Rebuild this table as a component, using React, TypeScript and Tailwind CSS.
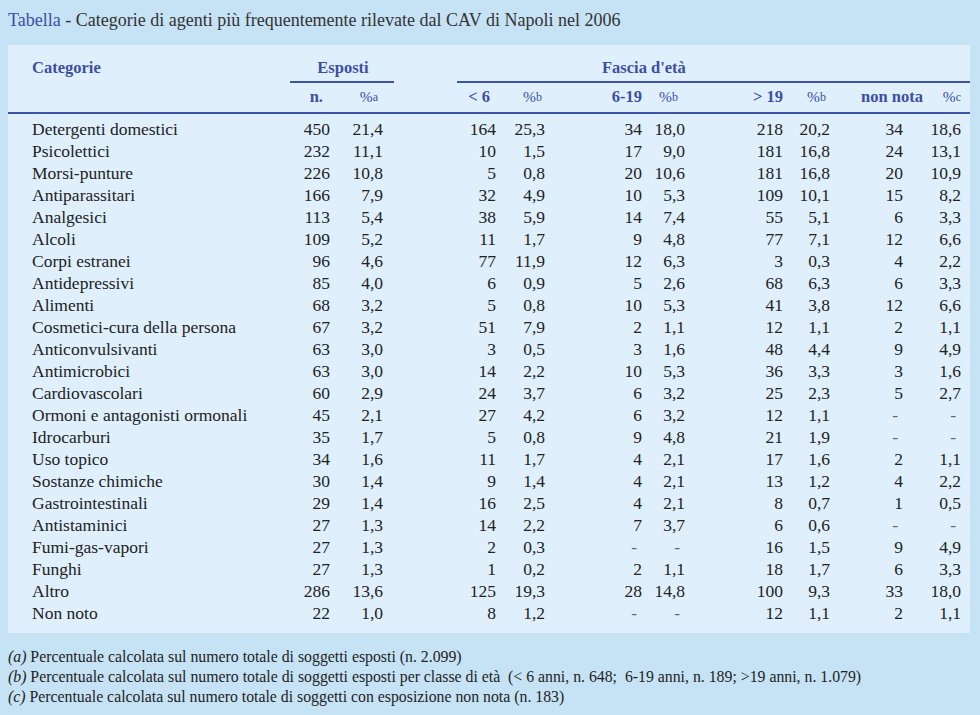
const rows: string[][] = [
  ['Detergenti domestici', '450', '21,4', '164', '25,3', '34', '18,0', '218', '20,2', '34', '18,6'],
  ['Psicolettici', '232', '11,1', '10', '1,5', '17', '9,0', '181', '16,8', '24', '13,1'],
  ['Morsi-punture', '226', '10,8', '5', '0,8', '20', '10,6', '181', '16,8', '20', '10,9'],
  ['Antiparassitari', '166', '7,9', '32', '4,9', '10', '5,3', '109', '10,1', '15', '8,2'],
  ['Analgesici', '113', '5,4', '38', '5,9', '14', '7,4', '55', '5,1', '6', '3,3'],
  ['Alcoli', '109', '5,2', '11', '1,7', '9', '4,8', '77', '7,1', '12', '6,6'],
  ['Corpi estranei', '96', '4,6', '77', '11,9', '12', '6,3', '3', '0,3', '4', '2,2'],
  ['Antidepressivi', '85', '4,0', '6', '0,9', '5', '2,6', '68', '6,3', '6', '3,3'],
  ['Alimenti', '68', '3,2', '5', '0,8', '10', '5,3', '41', '3,8', '12', '6,6'],
  ['Cosmetici-cura della persona', '67', '3,2', '51', '7,9', '2', '1,1', '12', '1,1', '2', '1,1'],
  ['Anticonvulsivanti', '63', '3,0', '3', '0,5', '3', '1,6', '48', '4,4', '9', '4,9'],
  ['Antimicrobici', '63', '3,0', '14', '2,2', '10', '5,3', '36', '3,3', '3', '1,6'],
  ['Cardiovascolari', '60', '2,9', '24', '3,7', '6', '3,2', '25', '2,3', '5', '2,7'],
  ['Ormoni e antagonisti ormonali', '45', '2,1', '27', '4,2', '6', '3,2', '12', '1,1', '-', '-'],
  ['Idrocarburi', '35', '1,7', '5', '0,8', '9', '4,8', '21', '1,9', '-', '-'],
  ['Uso topico', '34', '1,6', '11', '1,7', '4', '2,1', '17', '1,6', '2', '1,1'],
  ['Sostanze chimiche', '30', '1,4', '9', '1,4', '4', '2,1', '13', '1,2', '4', '2,2'],
  ['Gastrointestinali', '29', '1,4', '16', '2,5', '4', '2,1', '8', '0,7', '1', '0,5'],
  ['Antistaminici', '27', '1,3', '14', '2,2', '7', '3,7', '6', '0,6', '-', '-'],
  ['Fumi-gas-vapori', '27', '1,3', '2', '0,3', '-', '-', '16', '1,5', '9', '4,9'],
  ['Funghi', '27', '1,3', '1', '0,2', '2', '1,1', '18', '1,7', '6', '3,3'],
  ['Altro', '286', '13,6', '125', '19,3', '28', '14,8', '100', '9,3', '33', '18,0'],
  ['Non noto', '22', '1,0', '8', '1,2', '-', '-', '12', '1,1', '2', '1,1'],
];

// category + 10 numeric columns, widths read off the reference
const cols = 'grid grid-cols-[258px_40px_53px_113px_49px_97px_43px_98px_47px_73px_58px]';

function Pct({ letter }: { letter: string }) {
  return (
    <span className="font-normal text-[15.5px]">
      %<span className="text-[12px] relative -top-[1px]">{letter}</span>
    </span>
  );
}

export default function App() {
  return (
    <div className="w-[980px] h-[715px] bg-[#c6e2f5] text-[#222] overflow-hidden font-['Liberation_Serif','Times_New_Roman',serif]">
      {/* Title */}
      <div className="h-[45px] pl-2 pt-[8px] text-[18px] leading-[24px]">
        <span className="text-[#3c4fa2]">Tabella</span>
        <span className="text-[#333]"> - Categorie di agenti più frequentemente rilevate dal CAV di Napoli nel 2006</span>
      </div>

      {/* Table panel */}
      <div className="ml-2 w-[962px] bg-[#dff0fc] pl-6 pr-[9px] pt-[10px] pb-[9px]">
        {/* Header row 1 */}
        <div className={`${cols} text-[#3c4fa2] font-bold text-[16.5px] leading-[26px]`}>
          <div>Categorie</div>
          <div className="col-span-2 -mr-[11px] border-b-2 border-[#3e53a8] text-center pl-[2px]">
            Esposti
          </div>
          <div className="col-span-8 ml-[74px] -mr-[9px] border-b-2 border-[#3e53a8] pl-[145px]">
            Fascia d'età
          </div>
        </div>

        {/* Header row 2 */}
        <div
          className={`${cols} -ml-6 -mr-[9px] pl-6 pr-[9px] text-[#3c4fa2] font-bold text-[16.5px] leading-[28px] border-b-2 border-[#3e53a8]`}
        >
          <div />
          <div className="text-right pr-[7px]">n.</div>
          <div className="text-right pr-[5px]"><Pct letter="a" /></div>
          <div className="text-right pr-[6px]">&lt; 6</div>
          <div className="text-right pr-[3px]"><Pct letter="b" /></div>
          <div className="text-right">6-19</div>
          <div className="text-right pr-[7px]"><Pct letter="b" /></div>
          <div className="text-right">&gt; 19</div>
          <div className="text-right pr-[4px]"><Pct letter="b" /></div>
          <div className="text-right -mr-[20px] whitespace-nowrap">non nota</div>
          <div className="text-right pl-5"><Pct letter="c" /></div>
        </div>

        {/* Body */}
        <div className="pt-[4px] text-[17.5px] leading-[22px]">
          {rows.map((r) => (
            <div key={r[0]} className={cols}>
              <div className="whitespace-nowrap">{r[0]}</div>
              {r.slice(1).map((v, i) => (
                <div
                  key={i}
                  className={v === '-' ? 'text-right pr-[5px] text-[#666]' : 'text-right'}
                >
                  {v}
                </div>
              ))}
            </div>
          ))}
        </div>
      </div>

      {/* Footnotes */}
      <div className="pl-2 pt-[14px] text-[15.8px] leading-[20px] text-[#222]">
        <div>
          <i>(a)</i> Percentuale calcolata sul numero totale di soggetti esposti (n. 2.099)
        </div>
        <div>
          <i>(b)</i> Percentuale calcolata sul numero totale di soggetti esposti per classe di età&nbsp; (&lt; 6 anni, n. 648;&nbsp; 6-19 anni, n. 189; &gt;19 anni, n. 1.079)
        </div>
        <div>
          <i>(c)</i> Percentuale calcolata sul numero totale di soggetti con esposizione non nota (n. 183)
        </div>
      </div>
    </div>
  );
}
